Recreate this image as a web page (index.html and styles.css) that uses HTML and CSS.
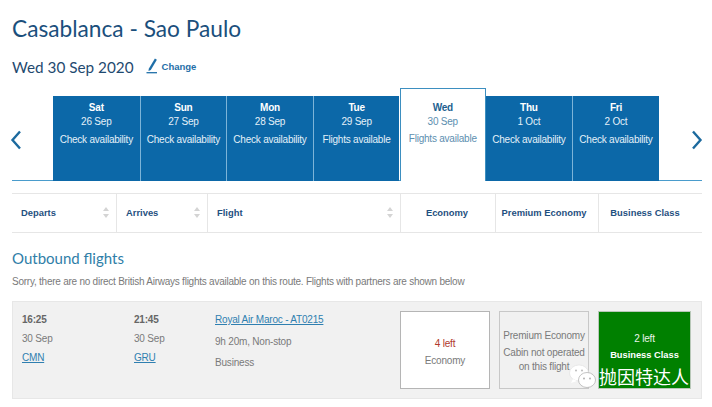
FILE: index.html
```html
<!DOCTYPE html>
<html lang="en">
<head>
<meta charset="utf-8">
<title>Casablanca - Sao Paulo</title>
<link rel="stylesheet" href="styles.css">
</head>
<body>
<main class="page">
  <h1 class="route">Casablanca - Sao Paulo</h1>
  <div class="date-row">
    <span class="date">Wed 30 Sep 2020</span>
    <svg class="pencil" viewBox="0 0 12 17" width="12" height="17"><path d="M2.800 11.800 8.900 1.500l2 1.200-6.100 10.200-2.300 1.100z" fill="#1f6fa8"/><path d="M0.500 15.700h10.500" stroke="#1f6fa8" stroke-width="1.300"/></svg>
    <a class="change">Change</a>
  </div>

  <div class="carousel">
    <div class="arrow">
      <svg viewBox="0 0 12 20" width="12" height="20"><path d="M10 1.500 2.500 10l7.500 8.500" fill="none" stroke="#1c6a9e" stroke-width="2.400"/></svg>
    </div>
    <div class="tabs">
      <div class="tab"><b>Sat</b><span>26 Sep</span><span class="status">Check availability</span></div>
      <div class="tab"><b>Sun</b><span>27 Sep</span><span class="status">Check availability</span></div>
      <div class="tab"><b>Mon</b><span>28 Sep</span><span class="status">Check availability</span></div>
      <div class="tab"><b>Tue</b><span>29 Sep</span><span class="status">Flights available</span></div>
      <div class="tab active"><b>Wed</b><span>30 Sep</span><span class="status">Flights available</span></div>
      <div class="tab"><b>Thu</b><span>1 Oct</span><span class="status">Check availability</span></div>
      <div class="tab"><b>Fri</b><span>2 Oct</span><span class="status">Check availability</span></div>
    </div>
    <div class="arrow right">
      <svg viewBox="0 0 12 20" width="12" height="20"><path d="M2 1.500 9.500 10 2 18.500" fill="none" stroke="#1c6a9e" stroke-width="2.400"/></svg>
    </div>
  </div>

  <div class="sort-head">
    <div class="col c-dep"><span>Departs</span><i class="sort"></i></div>
    <div class="col c-arr"><span>Arrives</span><i class="sort"></i></div>
    <div class="col c-fli"><span>Flight</span><i class="sort"></i></div>
    <div class="col c-eco center"><span>Economy</span></div>
    <div class="col c-pre center"><span>Premium Economy</span></div>
    <div class="col c-bus center"><span>Business Class</span></div>
  </div>

  <h2 class="outbound">Outbound flights</h2>
  <p class="notice">Sorry, there are no direct British Airways flights available on this route. Flights with partners are shown below</p>

  <section class="card">
    <div class="leg l-dep">
      <b>16:25</b><span>30 Sep</span><a>CMN</a>
    </div>
    <div class="leg l-arr">
      <b>21:45</b><span>30 Sep</span><a>GRU</a>
    </div>
    <div class="leg l-info">
      <a>Royal Air Maroc - AT0215</a><span>9h 20m, Non-stop</span><span>Business</span>
    </div>
    <div class="cabins">
      <div class="cabin eco"><em>4 left</em><span>Economy</span></div>
      <div class="cabin pre"><span>Premium Economy</span><span>Cabin not operated<br>on this flight</span></div>
      <div class="cabin bus"><span>2 left</span><b>Business Class</b></div>
    </div>
  </section>
</main>

<div class="watermark">
  <svg viewBox="0 0 30 28" width="30" height="28">
    <ellipse cx="11" cy="10" rx="9.500" ry="8" fill="#fff" stroke="#ddd" stroke-width=".6"/>
    <path d="M5 16l-2 4 6-2z" fill="#fff"/>
    <ellipse cx="19" cy="17" rx="8.500" ry="7.500" fill="#fff" stroke="#aaa" stroke-width=".7"/>
    <circle cx="8" cy="7.500" r="1" fill="#bbb"/><circle cx="14" cy="7.500" r="1" fill="#bbb"/>
    <circle cx="16" cy="15.500" r=".9" fill="#aaa"/><circle cx="22" cy="15.500" r=".9" fill="#aaa"/>
  </svg>
  <span>抛因特达人</span>
</div>
</body>
</html>
```
FILE: styles.css
```css
* { box-sizing: border-box; }
html, body { margin: 0; padding: 0; background: #fff; }
body { position: relative; width: 712px; height: 407px; overflow: hidden; font-family: "Liberation Sans", Arial, sans-serif; }
.page { padding: 14px 10px 0 12px; }

.route { margin: 0; font: 400 22.700px/30px Lato, sans-serif; color: #1b4f7c; }

.date-row { display: flex; align-items: center; height: 24px; margin-top: 11px; }
.date { font: 400 15.300px/24px Lato, sans-serif; color: #1f4a70; }
.pencil { margin: -4px 4px 0 12px; }
.change { font-size: 9.500px; font-weight: 700; color: #1f6fa8; margin-top: -2px; }

.carousel { display: flex; align-items: flex-end; height: 93px; margin-top: 9px; border-bottom: 1px solid #4a9ccc; }
.arrow { flex: 0 0 41px; align-self: center; padding: 12px 0 0 0; }
.arrow svg { display: block; margin-left: -2px; }
.arrow.right { flex: 1; padding-left: 32px; }
.arrow.right svg { margin: 0; }

.tabs { display: flex; align-items: flex-end; margin-bottom: -1px; }
.tab { width: 86.600px; height: 85px; padding-top: 5px; display: flex; flex-direction: column; align-items: center; background: #0c68a8; color: #e4f0f8; border-left: 1px solid #7db4d8; font-size: 10px; letter-spacing: -.22px; line-height: 14px; }
.tab:first-child { border-left: 0; }
.tab b { color: #fff; }
.tab .status { margin-top: 4px; white-space: nowrap; }
.tab.active { width: 85.600px; height: 93px; margin-left: .6px; padding-top: 12px; background: #fff; color: #5d8fb0; border: 1px solid #3d8fc0; border-bottom: 0; }
.tab.active .status { margin-top: 3px; }
.tab.active b { color: #1d5f90; }
.tab.active + .tab { border-left: 0; }

.sort-head { display: flex; height: 40px; margin-top: 12px; padding-bottom: 2px; border-top: 1px solid #e6e6e6; border-bottom: 1px solid #e6e6e6; font-size: 9.400px; font-weight: 700; color: #1f5080; }
.col { display: flex; align-items: center; justify-content: space-between; padding: 0 6px 0 9px; margin-bottom: -2px; border-left: 1px solid #e6e6e6; }
.col > span { margin-bottom: 2px; }
.col:first-child { border-left: 0; }
.center { justify-content: center; padding: 0; }
.c-dep { width: 104px; }
.c-arr { width: 91px; }
.c-fli { width: 193px; }
.c-eco { width: 95px; padding-right: 2px; }
.c-pre { width: 103px; padding-right: 6px; }
.c-bus { width: 104px; padding-right: 11px; }
.sort { position: relative; display: block; width: 6px; height: 11px; margin: 0 1px 2px 0; }
.sort::before, .sort::after { content: ""; position: absolute; left: 0; border-left: 3px solid transparent; border-right: 3px solid transparent; }
.sort::before { top: 0; border-bottom: 4px solid #d4d4d4; }
.sort::after { bottom: 0; border-top: 4px solid #d4d4d4; }

.outbound { margin: 15px 0 0; font: 400 15px/20px Lato, sans-serif; color: #2f7ea8; }
.notice { margin: 7px 0 0; font-size: 10px; letter-spacing: -.24px; line-height: 14px; color: #7a7a7a; white-space: nowrap; }

.card { display: flex; height: 98px; margin-top: 12px; background: #f1f1f1; border: 1px solid #e7e7e7; font-size: 10px; letter-spacing: -.2px; color: #7a7a7a; }
.leg { display: flex; flex-direction: column; align-items: flex-start; padding-top: 12px; line-height: 12px; }
.leg a { color: #2f7fb0; text-decoration: underline; }
.leg b { color: #666; }
.l-dep { width: 112px; padding-left: 9px; gap: 7px; }
.l-arr { width: 81px; padding-left: 9px; gap: 7px; }
.l-info { width: 194px; padding-left: 9px; gap: 9.500px; }
.cabins { display: flex; padding-top: 9px; }
.cabin { display: flex; flex-direction: column; align-items: center; justify-content: center; height: 78px; text-align: center; line-height: 14px; }
.eco { width: 90px; background: #fff; border: 1px solid #b5b5b5; gap: 3px; padding-top: 4px; }
.eco em { font-style: normal; color: #b0392b; }
.pre { width: 90px; margin-left: 9px; background: #f1f1f1; border: 1px solid #c8c8c8; gap: 2px; line-height: 14.500px; justify-content: flex-start; padding-top: 17px; }
.bus { width: 93px; margin-left: 9px; background: #008000; border: 1px solid #b8c8b8; color: #eaf5ea; gap: 2px; justify-content: flex-start; padding-top: 20px; }
.bus b { color: #fff; font-size: 9.300px; letter-spacing: 0; }

.watermark { position: absolute; left: 568px; top: 360px; display: flex; align-items: center; gap: 1px; color: #fff; font: 400 18px/24px "Noto Sans CJK SC", sans-serif; }
.watermark svg { margin-top: 3px; }
```
